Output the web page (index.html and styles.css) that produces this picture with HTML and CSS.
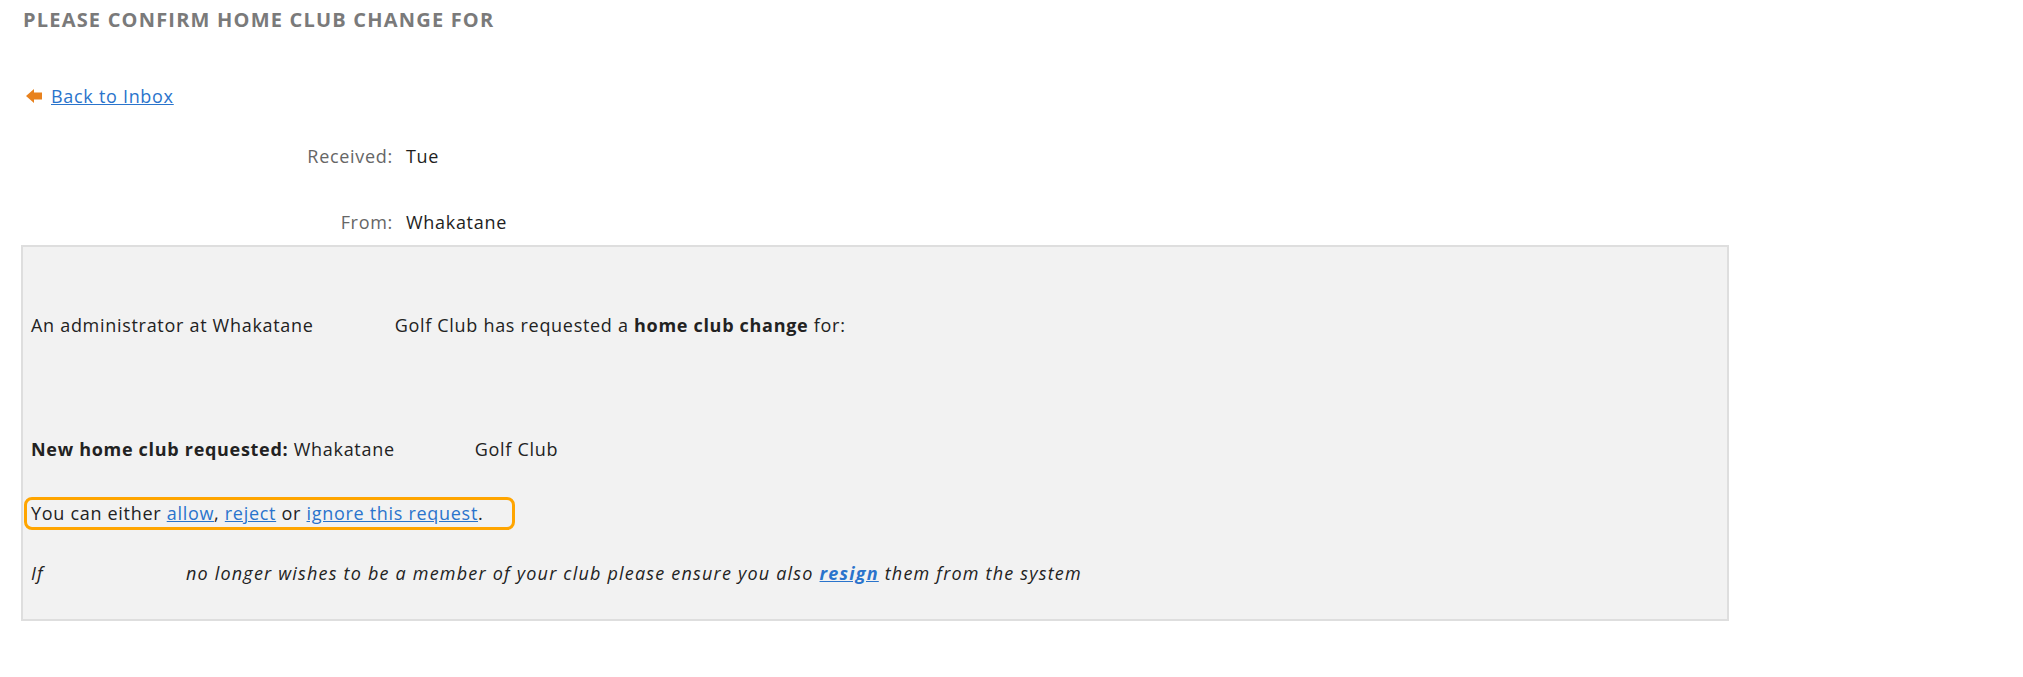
FILE: index.html
```html
<!DOCTYPE html>
<html>
<head>
<meta charset="utf-8">
<link rel="stylesheet" href="styles.css">
</head>
<body>
<div class="page">
  <h1 class="title">PLEASE CONFIRM HOME CLUB CHANGE FOR</h1>
  <div class="back">
    <svg class="back-icon" width="16" height="14" viewBox="0 0 16 14"><path d="M0 7 L8 0 L8 3.5 L16 3.5 L16 10.5 L8 10.5 L8 14 Z" fill="#e8821e"/></svg>
    <a href="#" class="link">Back to Inbox</a>
  </div>
  <div class="meta">
    <div class="meta-row"><span class="meta-label">Received:</span><span class="meta-value">Tue</span></div>
    <div class="meta-row meta-from"><span class="meta-label">From:</span><span class="meta-value">Whakatane</span></div>
  </div>
  <div class="message">
    <p class="msg-intro">An administrator at Whakatane<span class="gap gap-a"></span>Golf Club has requested a <b>home club change</b> for:</p>
    <p class="msg-new"><b>New home club requested:</b> Whakatane<span class="gap gap-b"></span>Golf Club</p>
    <p class="msg-actions">You can either <a href="#" class="link">allow</a>, <a href="#" class="link">reject</a> or <a href="#" class="link">ignore this request</a>.</p>
    <p class="msg-note">If<span class="gap gap-c"></span>no longer wishes to be a member of your club please ensure you also <a href="#" class="link strong-link">resign</a> them from the system</p>
  </div>
</div>
</body>
</html>
```
FILE: styles.css
```css
html, body {
  margin: 0;
  padding: 0;
  background: #ffffff;
}
body {
  font-family: "Open Sans", "Liberation Sans", sans-serif;
  font-size: 18px;
  line-height: 24px;
  letter-spacing: 0.7px;
  color: #222222;
}
.page {
  padding: 8px 0 0 21px;
  width: 1708px;
}
.title {
  margin: 0 0 0 2px;
  font-size: 20px;
  line-height: 24px;
  font-weight: 700;
  letter-spacing: 1.2px;
  color: #7a7a7a;
}
.back {
  margin-top: 52px;
  display: flex;
  align-items: center;
  gap: 9px;
  padding-left: 5px;
  height: 24px;
}
.link {
  color: #2a74cc;
  text-decoration: underline;
}
.meta {
  margin-top: 36px;
}
.meta-row {
  display: flex;
  height: 24px;
}
.meta-from {
  margin-top: 42px;
}
.meta-label {
  width: 372px;
  text-align: right;
  color: #666666;
}
.meta-value {
  margin-left: 13px;
  color: #1e1e1e;
}
.message {
  margin-top: 11px;
  background: #f2f2f2;
  border: 2px solid #dedede;
  height: 376px;
  padding: 0 8px;
  box-sizing: border-box;
}
.message p {
  margin: 0;
}
.msg-intro {
  margin-top: 66px !important;
}
.msg-new {
  margin-top: 100px !important;
}
.msg-actions {
  display: inline-block;
  margin: 36px 0 0 -7px !important;
  padding: 0 29px 0 4px;
  border: 3px solid #ffa500;
  border-radius: 8px;
  line-height: 27px;
}
.msg-note {
  margin-top: 31px !important;
  font-style: italic;
  letter-spacing: 1.2px;
}
.strong-link {
  font-weight: 700;
}
.gap {
  display: inline-block;
}
.gap-a { width: 81px; }
.gap-b { width: 80px; }
.gap-c { width: 142px; }
```
